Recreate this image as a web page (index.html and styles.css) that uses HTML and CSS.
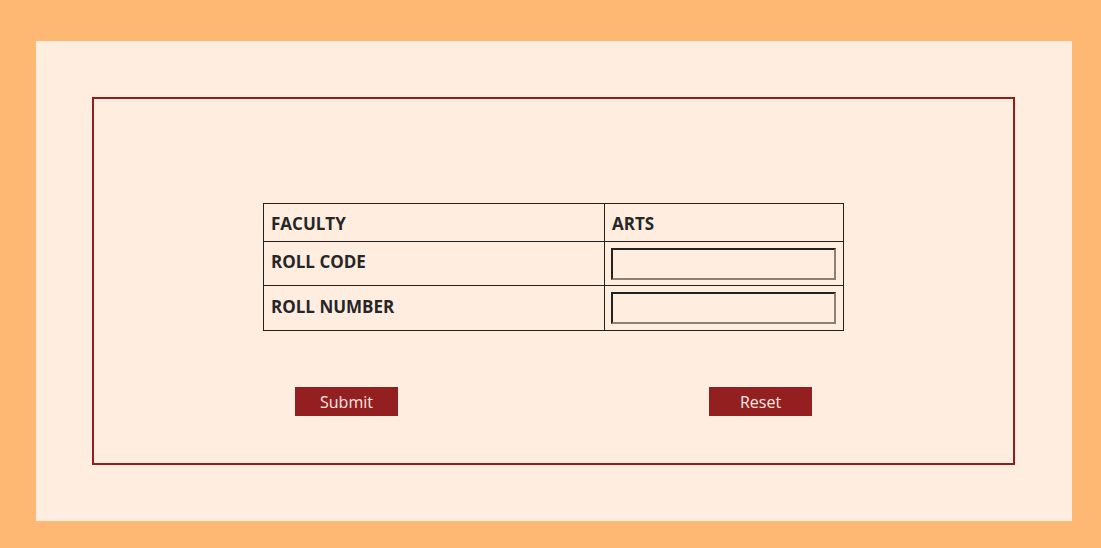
FILE: index.html
```html
<!DOCTYPE html>
<html>
<head>
<meta charset="utf-8">
<link rel="stylesheet" href="styles.css">
</head>
<body>
<div class="panel">
  <div class="box">
    <table class="form-table">
      <tr>
        <td class="label">FACULTY</td>
        <td class="label value">ARTS</td>
      </tr>
      <tr>
        <td class="label raised">ROLL CODE</td>
        <td class="field"><input type="text" class="inp"></td>
      </tr>
      <tr class="last">
        <td class="label raised">ROLL NUMBER</td>
        <td class="field"><input type="text" class="inp"></td>
      </tr>
    </table>
    <div class="actions">
      <button class="btn">Submit</button>
      <button class="btn">Reset</button>
    </div>
  </div>
</div>
</body>
</html>
```
FILE: styles.css
```css
html, body {
  margin: 0;
  padding: 0;
}
body {
  background: #ffb874;
  width: 1101px;
  height: 548px;
  overflow: hidden;
  padding-top: 41px;
  padding-left: 36px;
  box-sizing: border-box;
  font-family: "Open Sans", "Liberation Sans", sans-serif;
}
.panel {
  width: 1036px;
  height: 480px;
  background: #ffede0;
  box-sizing: border-box;
  padding: 56px 57px 56px 56px;
}
.box {
  width: 923px;
  height: 368px;
  border: 2px solid #941c1c;
  box-sizing: border-box;
  padding-top: 104px;
  padding-left: 169px;
  display: flex;
  flex-direction: column;
  align-items: flex-start;
}
.form-table {
  width: 581px;
  border-collapse: collapse;
}
.form-table td {
  border: 1px solid #222;
  padding: 0 6px 0 7px;
  font-weight: 700;
  font-size: 17px;
  color: #262626;
}
.form-table td.raised {
  padding-bottom: 4px;
}
.form-table tr:first-child td {
  height: 35px;
  padding-top: 2px;
}
.form-table tr td:first-child {
  width: 327px;
}
.form-table td.field {
  height: 43px;
  padding: 0 6px;
}
.form-table tr.last td.field {
  height: 44px;
}
.inp {
  display: block;
  width: 225px;
  height: 32px;
  box-sizing: border-box;
  background: #ffede0;
  border: 2px solid;
  border-color: #222 #8a8078 #8a8078 #222;
  margin: 0;
  padding: 0 4px;
  font-family: inherit;
  font-size: 15px;
}
.actions {
  width: 581px;
  box-sizing: border-box;
  display: flex;
  justify-content: space-between;
  padding: 0 32px;
  margin-top: 56px;
}
.btn {
  width: 103px;
  height: 29px;
  border: none;
  background: #941f20;
  color: #fde9e0;
  font-family: "Open Sans", "Liberation Sans", sans-serif;
  font-size: 16px;
  padding: 0;
  margin: 0;
  cursor: pointer;
}
```
